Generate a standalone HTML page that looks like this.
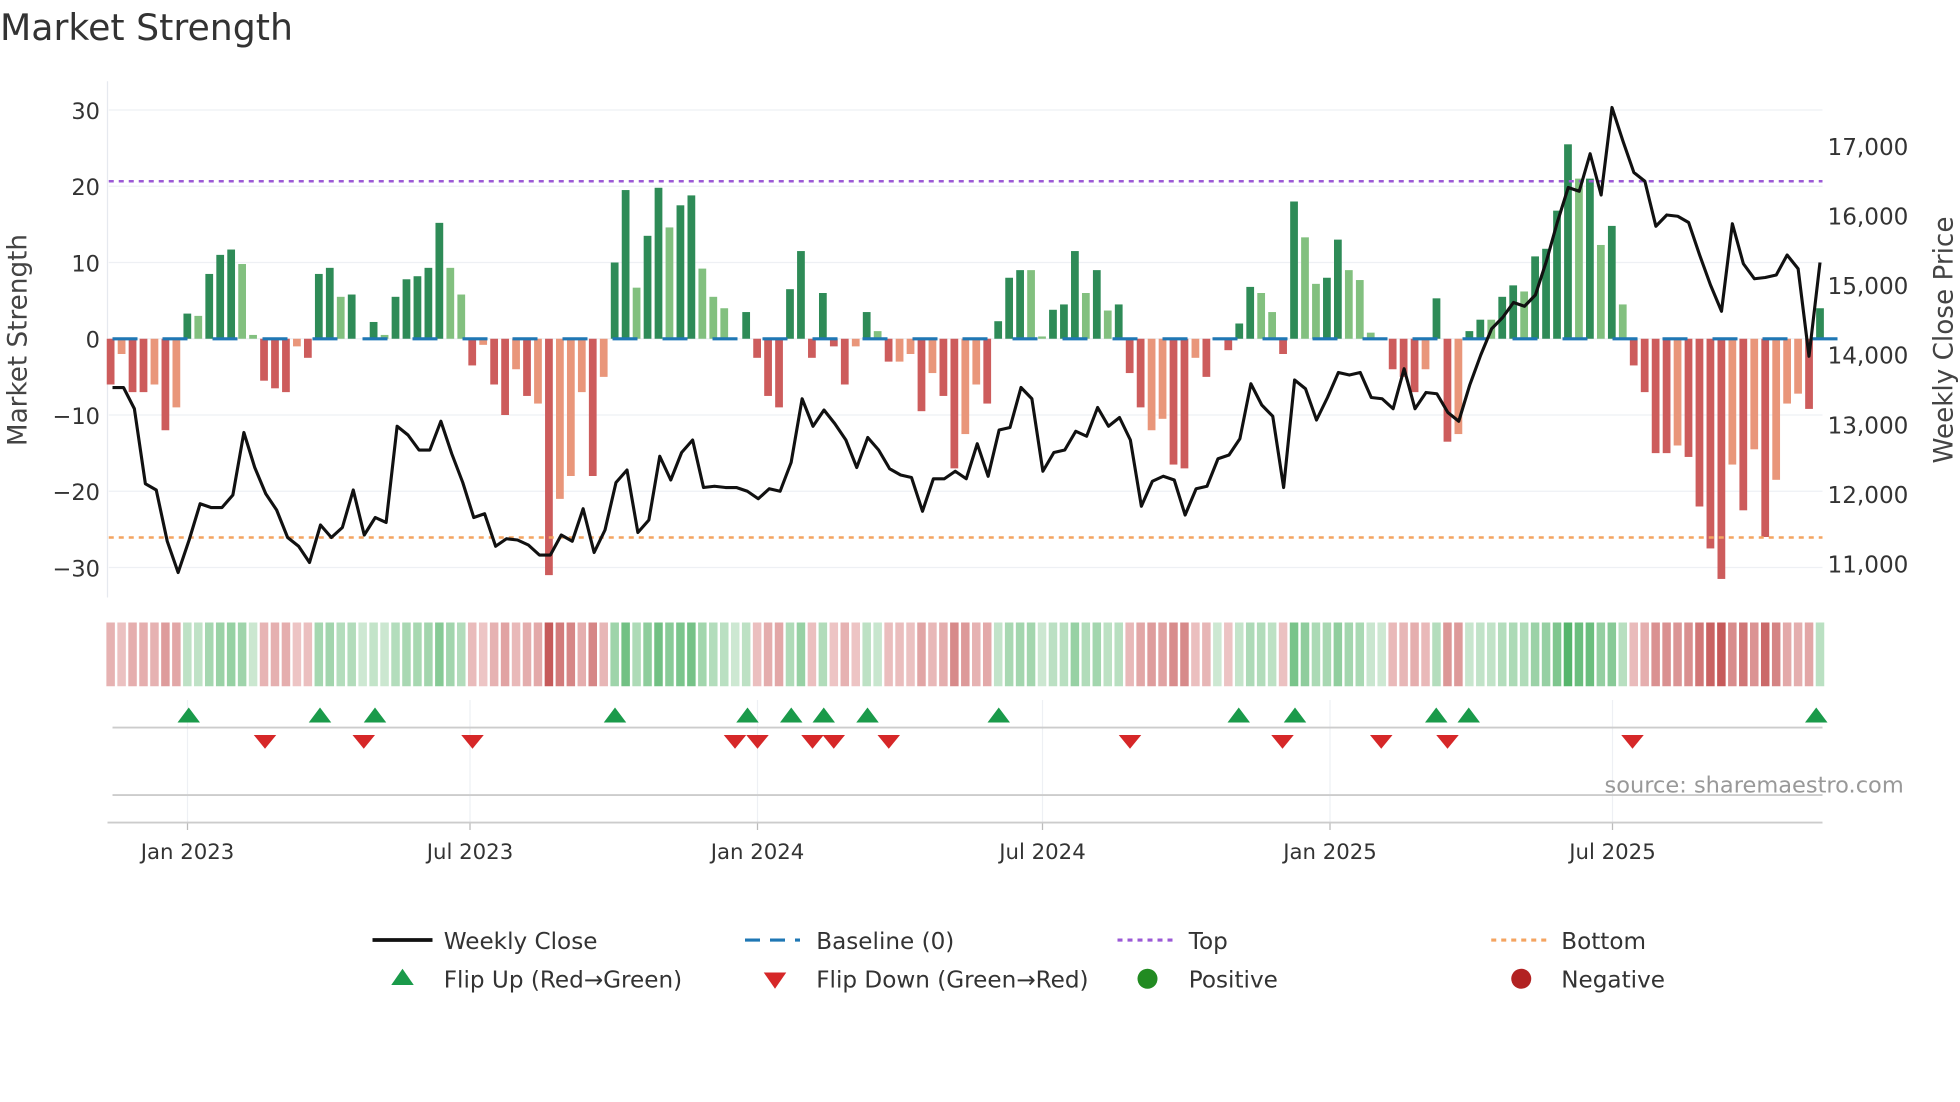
<!DOCTYPE html>
<html><head><meta charset="utf-8"><style>
html,body{margin:0;padding:0;background:#fff;}
svg{display:block;font-family:"DejaVu Sans","Liberation Sans",sans-serif;}
</style></head><body>
<svg id="s" width="1960" height="1102" viewBox="0 0 1568 881.6" xmlns="http://www.w3.org/2000/svg">
<rect width="1568" height="881.6" fill="#fff"/>
<text x="0" y="32" font-size="29" fill="#333">Market Strength</text>
<g id="grid"></g>
<g id="bars"></g>
<g id="heat"></g>
<g id="marks"></g>
<text x="1523" y="634" font-size="18" fill="#999" text-anchor="end">source: sharemaestro.com</text>
<text transform="translate(21,272) rotate(-90)" font-size="21" fill="#444" text-anchor="middle">Market Strength</text>
<text transform="translate(1562,272) rotate(-90)" font-size="21" fill="#444" text-anchor="middle">Weekly Close Price</text>
<g font-size="18.5" fill="#333">
<line x1="298" y1="752" x2="346" y2="752" stroke="#111" stroke-width="3"/><text x="355" y="759">Weekly Close</text>
<line x1="596" y1="752" x2="640" y2="752" stroke="#1f77b4" stroke-width="2.5" stroke-dasharray="12,8"/><text x="653" y="759">Baseline (0)</text>
<line x1="894" y1="752" x2="938" y2="752" stroke="#9b59d6" stroke-width="2.5" stroke-dasharray="4,4"/><text x="951" y="759">Top</text>
<line x1="1193" y1="752" x2="1237" y2="752" stroke="#f4a460" stroke-width="2.5" stroke-dasharray="4,4"/><text x="1249" y="759">Bottom</text>
<polygon points="322,775 331,788 313,788" fill="#1a9a4a"/><text x="355" y="790">Flip Up (Red→Green)</text>
<polygon points="620,791 629,778 611,778" fill="#d62728"/><text x="653" y="790">Flip Down (Green→Red)</text>
<circle cx="918" cy="783" r="8" fill="#228b22"/><text x="951" y="790">Positive</text>
<circle cx="1217" cy="783" r="8" fill="#b22222"/><text x="1249" y="790">Negative</text>
</g>
</svg>
<script>
var NS="http://www.w3.org/2000/svg";
function el(p,t,a){var e=document.createElementNS(NS,t);for(var k in a)e.setAttribute(k,a[k]);document.getElementById(p).appendChild(e);return e;}
function tx(p,x,y,s,anc,str,fill){var e=el(p,"text",{x:x,y:y,"font-size":s,"text-anchor":anc,fill:fill||"#333"});e.textContent=str;}
el("grid","line",{x1:86,y1:65,x2:86,y2:478,stroke:"#e6e9ef","stroke-width":1});
[30,20,10,0,-10,-20,-30].forEach(function(v){var y=271-6.1*v;el("grid","line",{x1:87,y1:y,x2:1458,y2:y,stroke:"#eef0f4","stroke-width":1});tx("grid",80,y+7,18,"end",v<0?"\u2212"+(-v):""+v);});
[11000,12000,13000,14000,15000,16000,17000].forEach(function(p){var y=451-(p-11000)*0.05567;tx("grid",1462,y+7,18.5,"start",(p/1000)+",000");});
[[150,"Jan 2023"],[376,"Jul 2023"],[606,"Jan 2024"],[834,"Jul 2024"],[1064,"Jan 2025"],[1290,"Jul 2025"]].forEach(function(t){
el("grid","line",{x1:t[0],y1:560,x2:t[0],y2:658,stroke:"#eef0f4","stroke-width":1});
el("grid","line",{x1:t[0],y1:658,x2:t[0],y2:664,stroke:"#bbb","stroke-width":1});
tx("grid",t[0],687,17,"middle",t[1]);});
el("grid","line",{x1:90,y1:582,x2:1458,y2:582,stroke:"#ccc","stroke-width":1.5});
el("grid","line",{x1:90,y1:636,x2:1458,y2:636,stroke:"#ccc","stroke-width":1.5});
el("grid","line",{x1:86,y1:658,x2:1458,y2:658,stroke:"#ccc","stroke-width":1.5});
var B="-6 -2L -7 -7 -6L -12 -9L 3.3 3L 8.5 11 11.7 9.8L 0.5L -5.5 -6.5 -7 -1L -2.5 8.5 9.3 5.5L 5.8 0 2.2 0.5L 5.5 7.8 8.2 9.3 15.2 9.3L 5.8L -3.5 -0.8L -6 -10 -4L -7.5 -8.5L -31 -21L -18L -7L -18 -5L 10 19.5 6.7L 13.5 19.8 14.6L 17.5 18.8 9.2L 5.5L 4L 0 3.5 -2.5 -7.5 -9 6.5 11.5 -2.5 6 -1 -6 -1L 3.5 1L -3 -3L -2L -9.5 -4.5L -7.5 -17 -12.5L -6L -8.5 2.3 8 9 9L 0.3L 3.8 4.5 11.5 6L 9 3.7L 4.5 -4.5 -9 -12L -10.5L -16.5 -17 -2.5L -5 0 -1.5 2 6.8 6L 3.5L -2 18 13.3L 7.2L 8 13 9L 7.7L 0.8L 0 -4 -5 -7 -4L 5.3 -13.5 -12.5L 1 2.5 2.5L 5.5 7 6.2L 10.8 11.8 16.8 25.5 21L 21 12.3L 14.8 4.5L -3.5 -7 -15 -15 -14L -15.5 -22 -27.5 -31.5 -16.5L -22.5 -14.5L -26 -18.5L -8.5L -7.2L -9.2 4".split(" ");
var n=B.length, step=(1456-88.5)/(n-1);
B.forEach(function(s,i){var L=s.indexOf("L")>=0;var v=parseFloat(s);var x=88.5+i*step;
var c=v>=0?(L?"#82c07f":"#2e8b57"):(L?"#e9967a":"#cd5c5c");
if(v!==0){var y0=271,y1=271-6.1*v;el("bars","rect",{x:x-3.1,y:Math.min(y0,y1),width:6.2,height:Math.abs(y1-y0),fill:c});}
var a=Math.min(1,Math.abs(v)/30);var hc;
if(v>=0){hc="rgb("+Math.round(205-140*a)+","+Math.round(232-60*a)+","+Math.round(210-120*a)+")";}
else{hc="rgb("+Math.round(238-40*a)+","+Math.round(200-110*a)+","+Math.round(200-110*a)+")";}
el("heat","rect",{x:x-3.4,y:498,width:6.8,height:51,fill:hc});
});
for(var x=90;x<1458;x+=40){el("bars","line",{x1:x,y1:271,x2:x+20,y2:271,stroke:"#1f77b4","stroke-width":2.5});}
el("bars","line",{x1:87,y1:145,x2:1458,y2:145,stroke:"#9b59d6","stroke-width":2,"stroke-dasharray":"4,4"});
el("bars","line",{x1:87,y1:430,x2:1458,y2:430,stroke:"#f4a460","stroke-width":2,"stroke-dasharray":"4,4"});
var P=[310,310,327,387,392,433,458,432,403,406,406,396,346,374,395,408,430,437,450,420,430,422,392,428,414,418,341,348,360,360,337,363,386,414,411,437,431,432,436,444,444,428,433,407,442,424,386,376,426,416,365,384,362,352,390,389,390,390,393,399,391,393,370,319,341,328,339,352,374,350,360,375,380,382,409,383,383,377,383,355,381,344,342,310,319,377,362,360,345,349,326,341,334,352,405,385,381,384,412,391,389,367,364,351,307,324,333,390,304,311,336,318,298,300,298,318,319,327,295,327,314,315,330,337,308,284,263,254,242,245,236,209,178,150,153,123,156,86,113,138,145,181,172,173,178,204,228,249,179,211,223,222,220,204,215,285,210];
var ps=(1456-90)/(P.length-1);
el("bars","polyline",{points:P.map(function(y,i){return (90+i*ps).toFixed(1)+","+y;}).join(" "),fill:"none",stroke:"#111","stroke-width":2.5,"stroke-linejoin":"round"});
[151,256,300,492,598,633,659,694,799,991,1036,1149,1175,1453].forEach(function(x){el("marks","polygon",{points:x+",566 "+(x+9)+",578 "+(x-9)+",578",fill:"#1a9a4a"});});
[212,291,378,588,606,650,667,711,904,1026,1105,1158,1306].forEach(function(x){el("marks","polygon",{points:x+",599 "+(x+9)+",588 "+(x-9)+",588",fill:"#d62728"});});
</script>
</body></html>
